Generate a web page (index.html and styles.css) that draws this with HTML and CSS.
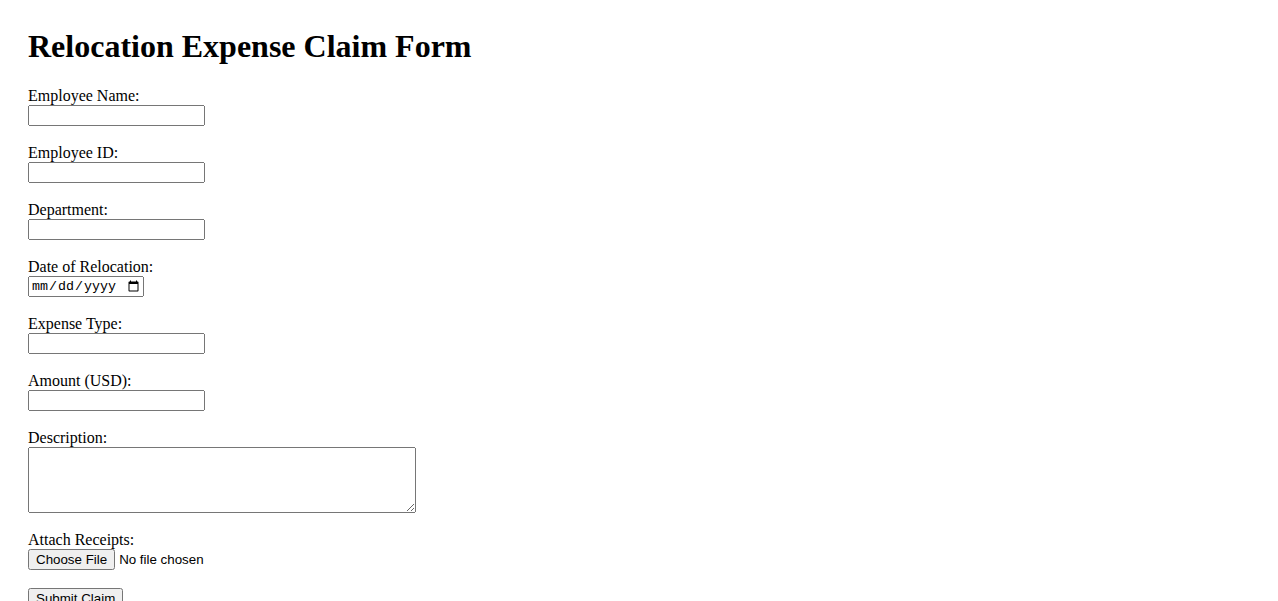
FILE: index.html
```html
<!DOCTYPE html>
<html>
<head>
<meta charset="utf-8">
<title>Relocation Expense Claim Form</title>
<link rel="stylesheet" href="styles.css">
</head>
<body>
<h1 class="title">Relocation Expense Claim Form</h1>
<form class="claim-form">
<label for="name">Employee Name:</label><br>
<input class="text-field" type="text" id="name"><br><br>
<label for="eid">Employee ID:</label><br>
<input class="text-field" type="text" id="eid"><br><br>
<label for="dept">Department:</label><br>
<input class="text-field" type="text" id="dept"><br><br>
<label for="date">Date of Relocation:</label><br>
<input class="date-field" type="date" id="date"><br><br>
<label for="type">Expense Type:</label><br>
<input class="text-field" type="text" id="type"><br><br>
<label for="amount">Amount (USD):</label><br>
<input class="text-field" type="text" id="amount"><br><br>
<label for="desc">Description:</label><br>
<textarea class="desc-field" id="desc"></textarea><br><br>
<label for="receipts">Attach Receipts:</label><br>
<input class="file-field" type="file" id="receipts"><br><br>
<button class="submit-btn" type="submit">Submit Claim</button>
</form>
</body>
</html>
```
FILE: styles.css
```css
body {
  margin: 0;
  padding: 7px 28px;
  font-family: "Liberation Serif", "Times New Roman", serif;
  font-size: 16px;
  color: #000;
  background: #fff;
}
.title {
  font-size: 32px;
  font-weight: bold;
  margin: 21.44px 0;
}
.text-field {
  width: 177px;
  height: 21px;
  box-sizing: border-box;
  font-family: "Liberation Sans", Arial, sans-serif;
  font-size: 13.33px;
}
.date-field {
  width: 116px;
  height: 21px;
  box-sizing: border-box;
  font-family: "Liberation Mono", monospace;
  font-size: 13.33px;
}
.desc-field {
  width: 388px;
  height: 66px;
  box-sizing: border-box;
  vertical-align: bottom;
}
.file-field, .submit-btn {
  font-family: "Liberation Sans", Arial, sans-serif;
  font-size: 13.33px;
}
```
